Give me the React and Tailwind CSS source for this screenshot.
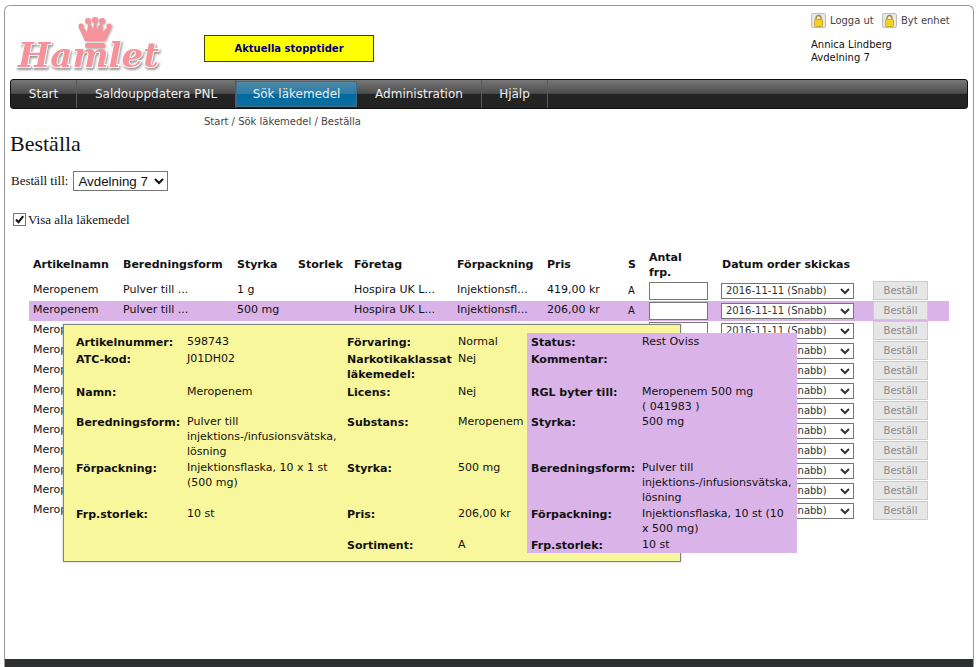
const rows = Array.from({ length: 12 }, (_, i) => i);

const yellowRows = [
  ["Artikelnummer:", "598743", "Förvaring:", "Normal"],
  ["ATC-kod:", "J01DH02", "Narkotikaklassat läkemedel:", "Nej"],
  ["Namn:", "Meropenem", "Licens:", "Nej"],
  ["Beredningsform:", "Pulver till injektions-/infusionsvätska, lösning", "Substans:", "Meropenem"],
  ["Förpackning:", "Injektionsflaska, 10 x 1 st (500 mg)", "Styrka:", "500 mg"],
  ["Frp.storlek:", "10 st", "Pris:", "206,00 kr"],
  ["", "", "Sortiment:", "A"],
];

const purpleRows = [
  ["Status:", "Rest Oviss"],
  ["Kommentar:", ""],
  ["RGL byter till:", "Meropenem 500 mg\n( 041983 )"],
  ["Styrka:", "500 mg"],
  ["Beredningsform:", "Pulver till\ninjektions-/infusionsvätska,\nlösning"],
  ["Förpackning:", "Injektionsflaska, 10 st (10\nx 500 mg)"],
  ["Frp.storlek:", "10 st"],
];

const rowHeights = "grid-rows-[17px_33px_30px_46px_46px_31px_17px]";

function Lock() {
  return (
    <span className="flex h-[15px] w-[15px] items-center justify-center rounded-[2px] border border-[#bdbdbd] bg-[#e9e9e9]">
      <svg width="11" height="13" viewBox="0 0 11 13">
        <path d="M3 6V4a2.5 2.5 0 0 1 5 0v2" fill="none" stroke="#a8842a" strokeWidth="1.3" />
        <rect x="1.5" y="5.5" width="8" height="7" rx="1" fill="#f6d21f" stroke="#c79a1a" strokeWidth="0.8" />
      </svg>
    </span>
  );
}

function Logo() {
  return (
    <svg width="150" height="60" viewBox="0 0 150 60" className="mt-[8px] ml-[10px] overflow-visible">
      <text
        x="3"
        y="53"
        fontFamily="'DejaVu Serif', serif"
        fontStyle="italic"
        fontWeight="700"
        fontSize="34"
        textLength="141"
        lengthAdjust="spacingAndGlyphs"
        fill="#f6939a"
        stroke="#ffffff"
        strokeWidth="2"
        paintOrder="stroke"
        style={{ filter: "drop-shadow(1px 2px 1px #999999)" }}
      >
        Hamlet
      </text>
      <g fill="#f6939a" style={{ filter: "drop-shadow(1px 1px 1px #aaaaaa)" }}>
        <circle cx="66" cy="12" r="2.6" />
        <circle cx="73" cy="7" r="3" />
        <circle cx="80" cy="6" r="3" />
        <circle cx="87" cy="7" r="3" />
        <circle cx="94" cy="12" r="2.6" />
        <path d="M64 14 Q70 13 72 19 L73 10 Q77 9 78 18 L79 8 H81 L82 18 Q83 9 87 10 L88 19 Q90 13 96 14 L90 27 H70 Z" />
        <rect x="70" y="29" width="20" height="5" rx="2" />
      </g>
    </svg>
  );
}

function NavItem({ label, active, className }) {
  return (
    <div
      className={
        active
          ? "flex h-[26px] items-center justify-center self-center border border-[#3f6e8a] bg-[linear-gradient(#4f8aa8,#2b7ba3_50%,#00699f_52%,#0d6f9f)] text-[#e4f0f6] " + className
          : "flex h-full items-center justify-center border-r border-[#5a5a5a] text-[#eeeeee] " + className
      }
    >
      {label}
    </div>
  );
}

function TableRow({ i }) {
  const highlighted = i === 1;
  const first = i === 0;
  return (
    <tr className={highlighted ? "h-[20px] bg-[#dab3e8]" : "h-[20px]"}>
      <td className="pl-[4px]">Meropenem</td>
      <td className="pl-[4px]">Pulver till ...</td>
      <td className="pl-[4px]">{first ? "1 g" : "500 mg"}</td>
      <td></td>
      <td className="pl-[4px]">Hospira UK L...</td>
      <td className="pl-[4px]">Injektionsfl...</td>
      <td className="pl-[4px]">{first ? "419,00 kr" : "206,00 kr"}</td>
      <td className="pl-[4px] text-[10px]">A</td>
      <td className="pl-[4px]">
        <input className="block h-[18px] w-[59px] border border-[#767676] bg-white" />
      </td>
      <td className="pl-[3px]">
        <select className="block h-[16px] w-[133px] border border-[#767676] bg-white text-[10px] text-[#333333]" defaultValue="a">
          <option value="a">2016-11-11 (Snabb)</option>
        </select>
      </td>
      <td className="pl-[4px]">
        <button disabled className="block h-[19px] w-[55px] border border-[#cccccc] bg-[#e6e6e6] text-[10px] text-[#888888]">
          Beställ
        </button>
      </td>
    </tr>
  );
}

export default function App() {
  return (
    <div className="h-[667px] w-[978px] overflow-hidden bg-white pt-[5px] pl-[4px] font-['DejaVu_Sans',sans-serif] text-[11px] text-[#111111]">
      <div className="relative flex h-[662px] w-[970px] flex-col rounded-t-[6px] border-x border-t border-[#999999]">
        {/* Header */}
        <div className="flex h-[73px]">
          <Logo />
          <div className="mt-[29px] ml-[39px] flex h-[27px] w-[170px] items-center justify-center border border-[#444400] bg-[#ffff00] text-[10px] font-bold text-[#000080]">
            Aktuella stopptider
          </div>
          <div className="mt-[7px] ml-[437px] text-[10px]">
            <div className="flex items-center text-[#444444]">
              <Lock />
              <span className="ml-[4px] w-[44px]">Logga ut</span>
              <span className="ml-[8px]"><Lock /></span>
              <span className="ml-[4px]">Byt enhet</span>
            </div>
            <div className="mt-[10px] leading-[13px]">
              <div>Annica Lindberg</div>
              <div>Avdelning 7</div>
            </div>
          </div>
        </div>

        {/* Menu */}
        <div className="mx-[5px] flex h-[30px] w-[958px] items-center rounded-[3px] border border-[#111111] bg-[linear-gradient(#777777,#4c4c4c_48%,#232324_50%,#232324)] text-[12px]">
          <NavItem label="Start" className="w-[66px]" />
          <NavItem label="Saldouppdatera PNL" className="w-[159px]" />
          <NavItem label="Sök läkemedel" active className="w-[121px]" />
          <NavItem label="Administration" className="w-[125px]" />
          <NavItem label="Hjälp" className="w-[66px]" />
        </div>

        <div className="mt-[6px] ml-[199px] text-[10px] leading-[14px] text-[#444444]">Start / Sök läkemedel / Beställa</div>

        <h1 className="mt-[2px] ml-[5px] font-['Liberation_Serif',serif] text-[22px] leading-[26px] text-[#111111]">Beställa</h1>

        <div className="mt-[14px] ml-[6px] flex items-center font-['Liberation_Serif',serif] text-[13px]">
          <span>Beställ till:</span>
          <select className="ml-[5px] h-[20px] w-[95px] border border-[#767676] bg-white font-['Liberation_Sans',sans-serif] text-[13.33px] leading-none" defaultValue="a">
            <option value="a">Avdelning 7</option>
          </select>
        </div>

        <label className="mt-[19px] ml-[8px] flex items-center font-['Liberation_Serif',serif] text-[13px]">
          <input type="checkbox" defaultChecked className="peer sr-only" />
          <span className="flex h-[13px] w-[13px] items-center justify-center border border-[#767676] bg-white">
            <svg width="11" height="11" viewBox="0 0 11 11">
              <path d="M2 5.5 L4.5 8.2 L9.2 2.2" fill="none" stroke="#111111" strokeWidth="2" />
            </svg>
          </span>
          <span className="ml-[2px]">Visa alla läkemedel</span>
        </label>

        {/* Order table */}
        <table className="mt-[20px] ml-[24px] w-[920px] table-fixed border-collapse text-left">
          <colgroup>
            <col className="w-[90px]" />
            <col className="w-[114px]" />
            <col className="w-[61px]" />
            <col className="w-[56px]" />
            <col className="w-[103px]" />
            <col className="w-[90px]" />
            <col className="w-[81px]" />
            <col className="w-[21px]" />
            <col className="w-[73px]" />
            <col className="w-[151px]" />
            <col className="w-[80px]" />
          </colgroup>
          <thead>
            <tr className="h-[31px] font-bold">
              <th className="pl-[4px]">Artikelnamn</th>
              <th className="pl-[4px]">Beredningsform</th>
              <th className="pl-[4px]">Styrka</th>
              <th className="pl-[4px]">Storlek</th>
              <th className="pl-[4px]">Företag</th>
              <th className="pl-[4px]">Förpackning</th>
              <th className="pl-[4px]">Pris</th>
              <th className="pl-[4px]">S</th>
              <th className="pl-[4px] leading-[15px]">Antal<br />frp.</th>
              <th className="pl-[4px]">Datum order skickas</th>
              <th></th>
            </tr>
          </thead>
          <tbody>
            {rows.map((i) => (
              <TableRow key={i} i={i} />
            ))}
          </tbody>
        </table>

        {/* Article popup */}
        <div className="absolute top-[318px] left-[58px] h-[238px] w-[618px] border border-[#808080] bg-[#f9f79b] shadow-[0_0_2px_#bbbbbb]">
          <div className={"mt-[9px] ml-[12px] grid grid-cols-[111px_160px_111px_1fr] leading-[15px] " + rowHeights}>
            {yellowRows.map((r, i) => (
              <div key={i} className="contents">
                <div className="pt-[1px] font-bold">{r[0]}</div>
                <div className="pr-[6px]">{r[1]}</div>
                <div className="pt-[1px] font-bold">{r[2]}</div>
                <div>{r[3]}</div>
              </div>
            ))}
          </div>
          <div className="absolute top-[8px] left-[463px] h-[220px] w-[270px] bg-[#dab3e8] pt-[1px] pl-[4px]">
            <div className={"grid grid-cols-[111px_1fr] leading-[15px] " + rowHeights}>
              {purpleRows.map((r, i) => (
                <div key={i} className="contents">
                  <div className="pt-[1px] font-bold">{r[0]}</div>
                  <div className="whitespace-pre-line">{r[1]}</div>
                </div>
              ))}
            </div>
          </div>
        </div>

        <div className="mt-auto h-[8px] bg-[#2f3031]"></div>
      </div>
    </div>
  );
}
